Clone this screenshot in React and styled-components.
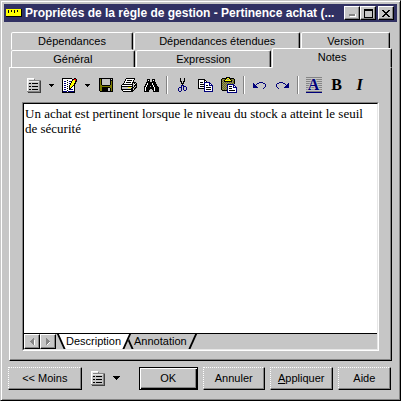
import { Fragment, useState } from "react";
import styled, { createGlobalStyle, css } from "styled-components";

const face = "#c6c6c6";
const shadow = "#848484";
const navy = "#00007b";

const GlobalStyle = createGlobalStyle`
  * {
    box-sizing: border-box;
  }
  body {
    margin: 0;
    background: ${face};
    font-family: "Liberation Sans", Arial, sans-serif;
    font-size: 11px;
    color: #000;
  }
  button, textarea {
    font: inherit;
    color: inherit;
    padding: 0;
    margin: 0;
    border: 0;
    border-radius: 0;
  }
`

const palette = {
  k: "#000000",
  w: "#ffffff",
  g: "#848484",
  l: "#c6c6c6",
  e: "#e7e7e7",
  d: "#424242",
  y: "#ffff00",
  o: "#7b7b00",
  b: "#00007b",
  r: "#ff0000"
}

// One string per row, one letter per pixel, "." stays transparent
const icons = {
  ruler: [
    "yyyyyyyyyyyyyyyk",
    "yykyykyykyykyyyk",
    "yykyykyykyykyyyk",
    "yykyyyyykyyyyyyk",
    "yyyyyyyyyyyyyyyk",
    "yyyyyyyyyyyyyyyk",
    "yyyyyyyyyyyyyyyk",
    "kkkkkkkkkkkkkkkk"
  ],
  list: [
    "wwwwwww.......",
    "weeeeeeg......",
    "wegggggggggggg",
    "weeeeeeeeeeegd",
    "wellllllllllgd",
    "wlkklkkkkkklgd",
    "wlllllllllllgd",
    "wlllllllllllgd",
    "wlkklkkkkkklgd",
    "wlllllllllllgd",
    "wlllllllllllgd",
    "wlkklkkkkkklgd",
    "wlllllllllllgd",
    "gggggggggggggd",
    ".ddddddddddddd"
  ],
  note: [
    "kkkkkkkkkk..kk..",
    "kwwwwwwwwwkkrrk.",
    "kwwwwkwwwwkyyrk.",
    "kwbbwwwbbkyyykk.",
    "kwwwwkwwwkyyyk..",
    "kwbbwwwbkyyykk..",
    "kwwwwkwwkyyyk...",
    "kwbbwwwkyyykk...",
    "kwwwwkwkyykwk...",
    "kwbbwwwkykwwk...",
    "kwwwwkwkkwwwk...",
    "kwbbwwwkbbbwk...",
    "kwwwwkwwwwwwk...",
    "kbbbbwbbbbbbk...",
    "kkkkkkkkkkkkk..."
  ],
  save: [
    "kkkkkkkkkkkkkk",
    "kokllllllllklk",
    "kokllllllllkkk",
    "kokllllllllkok",
    "kokllllllllkok",
    "kokllllllllkok",
    "kokllllllllkok",
    "kookkkkkkkkook",
    "kooooooooooook",
    "kookkkkkkkkook",
    "kookkkkkkllkok",
    "kookkkkkkllkok",
    "kookkkkkkllkok",
    ".kkkkkkkkkkkkk"
  ],
  print: [
    ".....kkkkkkkkk..",
    "....kwwwwwwwwk..",
    "....kwkkkkkwk...",
    "...kwwwwwwwwk...",
    "...kwkkkkkwkkkk.",
    "..kwwwwwwwwklklk",
    ".kkkkkkkkkkklwkk",
    "kwwwwwwwwwwklkkk",
    "kkkkkkkkkkkklklk",
    "kllllllyyylkklkk",
    "klllllllllkklkk.",
    "kkkkkkkkkkkklk..",
    ".kwwwwwwwwkkk...",
    "..kkkkkkkkkk...."
  ],
  find: [
    "...kkk..kkk....",
    "...kwk..kwk....",
    "...kkk..kkk....",
    "..kkkkkkkkkk...",
    "..kwkkkkwkkk...",
    ".kkwkkkkwkkkk..",
    ".kwkkkkkkwkkk..",
    "kkwkkklkkwkkkk.",
    "kwkkkkkkkkwkkkk",
    "kwkkkkkkkkwkkkk",
    "kwkkkk..kkwkkkk",
    "kwkkk....kwkkkk",
    "kkkkk....kkkkkk"
  ],
  cut: [
    "..k...k..",
    "..k...k..",
    "..k...k..",
    "..kk.kk..",
    "...k.k...",
    "...kkk...",
    "....k....",
    "...bbb...",
    "...b.bbb.",
    ".bbb.b..b",
    "b..b.b..b",
    "b..b.b..b",
    "b..b..bb.",
    ".bb......"
  ],
  copy: [
    "kkkkkkk.........",
    "kwwwwwkk........",
    "kwwwwwkwk.......",
    "kwkkkwbbbbbb....",
    "kwwwwwbwwwwbb...",
    "kwkkkkbwwwwbwb..",
    "kwwwwwbwkkwbbbb.",
    "kwkkkkbwwwwwwwb.",
    "kwwwwwbwkkkkkwb.",
    "kkkkkkbwwwwwwwb.",
    "......bwkkkkkwb.",
    "......bwwwwwwwb.",
    "......bbbbbbbbb."
  ],
  paste: [
    ".....kkkk.......",
    ".kkkkkyykkkkk...",
    "kogokyggykogok..",
    "kgokyyyyyykogk..",
    "kogkkkkkkkkgok..",
    "kgogogogogogok..",
    "kogogogogogogk..",
    "kgogogbbbbbbb...",
    "kogogobwwwwwbb..",
    "kgogogbwkkkwbwb.",
    "kogogobwwwwwbbbb",
    "kgogogbwkkkwwwwb",
    "kogogobwwwwwwwwb",
    ".kkkkkbwkkkkkkwb",
    "......bwwwwwwwwb",
    "......bbbbbbbbbb"
  ],
  undo: [
    "......bbbb...",
    "b...bb....bb.",
    "bb.b........b",
    "bbb.........b",
    "bbbb........b",
    "bbbbb......b.",
    "..........b.."
  ],
  redo: [
    "...bbbb......",
    ".bb....bb...b",
    "b........b.bb",
    "b.........bbb",
    "b........bbbb",
    ".b......bbbbb",
    "..b.........."
  ],
  arrow: [
    "kkkkk",
    ".kkk.",
    "..k.."
  ],
  bigArrow: [
    "kkkkkkk",
    ".kkkkk.",
    "..kkk..",
    "...k..."
  ],
  minimize: [
    ".......",
    ".......",
    ".......",
    ".......",
    ".......",
    "ggggggw",
    "ggggggw",
    ".wwwwww"
  ],
  maximize: [
    "kkkkkkkkk",
    "kkkkkkkkk",
    "k.......k",
    "k.......k",
    "k.......k",
    "k.......k",
    "k.......k",
    "k.......k",
    "kkkkkkkkk"
  ],
  close: [
    "kk....kk",
    ".kk..kk.",
    "..kkkk..",
    "...kk...",
    "..kkkk..",
    ".kk..kk.",
    "kk....kk"
  ],
  left: [
    "...g.",
    "..gg.",
    ".gggw",
    "ggggw",
    ".gggw",
    "..ggw",
    "...gw"
  ],
  right: [
    "g....",
    "gg...",
    "ggg..",
    "gggg.",
    "gggw.",
    "ggw..",
    "gw..."
  ]
}

const Svg = styled.svg`
  display: block;
  flex: none;
`

const PixelIcon = ({name}) => {
  const rows = icons[name]
  const width = rows[0].length

  return (
    <Svg width={width} height={rows.length} viewBox={`0 0 ${width} ${rows.length}`} shapeRendering="crispEdges" aria-hidden="true">
      {rows.map((row, y) => [...row].map((c, x) => (
        c !== "." && <rect key={`${x}-${y}`} x={x} y={y} width="1" height="1" fill={palette[c]}/>
      )))}
    </Svg>
  )
}

const raised = css`
  border: 1px solid;
  border-color: #fff #000 #000 #fff;
  box-shadow: inset -1px -1px ${shadow};
`

const Window = styled.main`
  min-height: 100vh;
  display: flex;
  flex-direction: column;
  padding: 2px;
  background: ${face};
  border: 1px solid;
  border-color: ${face} #000 #000 ${face};
  box-shadow: inset 1px 1px #fff, inset -1px -1px ${shadow};
`

const TitleBar = styled.header`
  display: flex;
  align-items: center;
  height: 18px;
  margin: 1px;
  padding: 0 3px 0 2px;
  background: #313163;
  color: #fff;
`

const Title = styled.h1`
  flex: 1;
  min-width: 0;
  margin: 0 0 0 3px;
  font-size: 12px;
  line-height: 18px;
  font-weight: bold;
  white-space: nowrap;
  overflow: hidden;
`

const TitleButton = styled.button`
  ${raised}
  display: flex;
  align-items: center;
  justify-content: center;
  width: 16px;
  height: 14px;
  background: ${face};
  margin-left: ${({$apart}) => $apart ? "2px" : "0"};
`

const Tabs = styled.div`
  display: flex;
  flex-direction: column;
  padding: 9px 6px 0 8px;
`

const TabRow = styled.div`
  display: flex;
  align-items: flex-end;
  gap: 1px;
  height: 18px;
  padding-right: ${({$back}) => $back ? "2px" : "0"};
`

const Tab = styled.button`
  flex: ${({$grow}) => $grow} 1 0;
  height: 18px;
  background: ${face};
  border: 1px solid;
  border-color: #fff #000 transparent #fff;
  border-radius: 2px 2px 0 0;
  box-shadow: inset -1px 0 ${shadow};
  line-height: 16px;
  ${({$selected}) => $selected && css`
    position: relative;
    z-index: 1;
    height: 20px;
    padding-bottom: 3px;
    border-bottom-color: ${face};
  `}
`

const Panel = styled.section`
  flex: 1;
  display: flex;
  flex-direction: column;
  margin: -1px 6px 0;
  padding: 0 12px 9px;
  ${raised}
`

const Toolbar = styled.div`
  display: flex;
  align-items: center;
  height: 34px;
`

const ToolButton = styled.button`
  display: flex;
  align-items: center;
  justify-content: center;
  flex: none;
  width: 23px;
  height: 24px;
  background: transparent;
`

const ArrowButton = styled(ToolButton)`
  width: 13px;
`

const Separator = styled.span`
  flex: none;
  width: 2px;
  height: 18px;
  margin: 0 3px;
  border-left: 1px solid ${shadow};
  border-right: 1px solid #fff;
`

const Letter = styled.span`
  width: 16px;
  font-family: "Liberation Serif", "Times New Roman", serif;
  font-size: 16px;
  line-height: 16px;
  font-weight: bold;
  font-style: ${({$italic}) => $italic ? "italic" : "normal"};
`

const FontLetter = styled(Letter)`
  height: 16px;
  color: ${navy};
  border-bottom: 1px solid ${navy};
  background: repeating-linear-gradient(${shadow} 0 1px, transparent 1px 2px);
  text-shadow: -1px 0 ${face}, 1px 0 ${face};
`

const Editor = styled.div`
  flex: 1;
  display: flex;
  flex-direction: column;
  border: 1px solid;
  border-color: ${shadow} #fff #fff ${shadow};
`

const EditorBody = styled.div`
  flex: 1;
  display: flex;
  flex-direction: column;
  border: 1px solid;
  border-color: #000 #e7e7e7 #e7e7e7 #000;
`

const NoteText = styled.textarea`
  flex: 1;
  width: 100%;
  padding: 2px 8px 2px 1px;
  background: #fff;
  font-family: "Liberation Serif", "Times New Roman", serif;
  font-size: 13px;
  line-height: 15px;
  resize: none;
  outline: none;
  overflow: hidden;
`

const SheetBar = styled.div`
  display: flex;
  height: 16px;
  border-top: 1px solid #000;
  overflow: hidden;
`

const ScrollButton = styled.button`
  ${raised}
  display: flex;
  align-items: center;
  justify-content: center;
  flex: none;
  width: 16px;
  background: ${face};
`

const SheetTabs = styled.div`
  display: flex;
  padding-left: 4px;
`

const SheetTab = styled.button`
  position: relative;
  z-index: ${({$selected}) => $selected ? 1 : 0};
  padding: 0 7px 0 6px;
  line-height: 15px;
  background: transparent;

  &::before, &::after {
    content: "";
    position: absolute;
    z-index: -1;
    top: -1px;
    bottom: 0;
    background: ${({$selected}) => $selected ? "#fff" : face};
  }
  &::before {
    left: 0;
    right: 50%;
    border-left: 2px solid #000;
    transform: skewX(24deg);
  }
  &::after {
    left: 30%;
    right: 0;
    border-right: 2px solid #000;
    transform: skewX(-24deg);
  }
`

const Footer = styled.footer`
  display: flex;
  align-items: center;
  gap: 5px;
  padding: 5px 7px 8px 5px;
`

const PushButton = styled.button`
  flex: ${({$grow}) => $grow} 1 0;
  height: 23px;
  background: ${face};
  border: 1px solid #000;
  border-top: 1px dotted #fff;
  border-left: 1px dotted #fff;
  box-shadow: inset -1px -1px ${shadow};
  ${({$primary}) => $primary && css`
    border: 1px solid #000;
    box-shadow: inset 1px 1px #fff, inset -1px -1px #000, inset -2px -2px ${shadow};
  `}
`

const MenuGroup = styled.div`
  display: flex;
  flex: none;
  width: 47px;
`

const tabRows = [
  [["Dépendances", 122], ["Dépendances étendues", 167], ["Version", 88]],
  [["Général", 124], ["Expression", 136], ["Notes", 120]]
]

const toolGroups = [
  [["save", "Enregistrer"], ["print", "Imprimer"], ["find", "Rechercher"]],
  [["cut", "Couper"], ["copy", "Copier"], ["paste", "Coller"]],
  [["undo", "Annuler la frappe"], ["redo", "Rétablir"]]
]

const App = () => {
  const [tab, setTab] = useState("Notes")
  const [sheet, setSheet] = useState("Description")
  const [text, setText] = useState("Un achat est pertinent lorsque le niveau du stock a atteint le seuil de sécurité")

  return (
    <>
      <GlobalStyle/>
      <Window>
        <TitleBar>
          <PixelIcon name="ruler"/>
          <Title>Propriétés de la règle de gestion - Pertinence achat (...</Title>
          <TitleButton aria-label="Réduire"><PixelIcon name="minimize"/></TitleButton>
          <TitleButton aria-label="Agrandir"><PixelIcon name="maximize"/></TitleButton>
          <TitleButton aria-label="Fermer" $apart><PixelIcon name="close"/></TitleButton>
        </TitleBar>
        <Tabs role="tablist">
          {tabRows.map((row, i) => (
            <TabRow key={i} $back={i === 0}>
              {row.map(([label, grow]) => (
                <Tab key={label} role="tab" aria-selected={tab === label} $selected={tab === label} $grow={grow} onClick={() => setTab(label)}>
                  {label}
                </Tab>
              ))}
            </TabRow>
          ))}
        </Tabs>
        <Panel>
          <Toolbar>
            <ToolButton aria-label="Menu"><PixelIcon name="list"/></ToolButton>
            <ArrowButton aria-label="Options du menu"><PixelIcon name="arrow"/></ArrowButton>
            <ToolButton aria-label="Modifier"><PixelIcon name="note"/></ToolButton>
            <ArrowButton aria-label="Options de modification"><PixelIcon name="arrow"/></ArrowButton>
            {toolGroups.map((group, i) => (
              <Fragment key={i}>
                {group.map(([icon, label]) => (
                  <ToolButton key={icon} aria-label={label}><PixelIcon name={icon}/></ToolButton>
                ))}
                <Separator/>
              </Fragment>
            ))}
            <ToolButton aria-label="Police"><FontLetter>A</FontLetter></ToolButton>
            <ToolButton aria-label="Gras"><Letter>B</Letter></ToolButton>
            <ToolButton aria-label="Italique"><Letter $italic>I</Letter></ToolButton>
          </Toolbar>
          <Editor>
            <EditorBody>
              <NoteText aria-label={sheet} spellCheck={false} value={text} onChange={e => setText(e.target.value)}/>
              <SheetBar>
                <ScrollButton aria-label="Précédent"><PixelIcon name="left"/></ScrollButton>
                <ScrollButton aria-label="Suivant"><PixelIcon name="right"/></ScrollButton>
                <SheetTabs role="tablist">
                  {["Description", "Annotation"].map(label => (
                    <SheetTab key={label} role="tab" aria-selected={sheet === label} $selected={sheet === label} onClick={() => setSheet(label)}>
                      {label}
                    </SheetTab>
                  ))}
                </SheetTabs>
              </SheetBar>
            </EditorBody>
          </Editor>
        </Panel>
        <Footer>
          <PushButton $grow={74}>&lt;&lt; Moins</PushButton>
          <MenuGroup>
            <ToolButton aria-label="Menu"><PixelIcon name="list"/></ToolButton>
            <ArrowButton aria-label="Options du menu"><PixelIcon name="bigArrow"/></ArrowButton>
          </MenuGroup>
          <PushButton $grow={59} $primary>OK</PushButton>
          <PushButton $grow={62}>Annuler</PushButton>
          <PushButton $grow={63}><u>A</u>ppliquer</PushButton>
          <PushButton $grow={53}>Aide</PushButton>
        </Footer>
      </Window>
    </>
  )
}

export default App
